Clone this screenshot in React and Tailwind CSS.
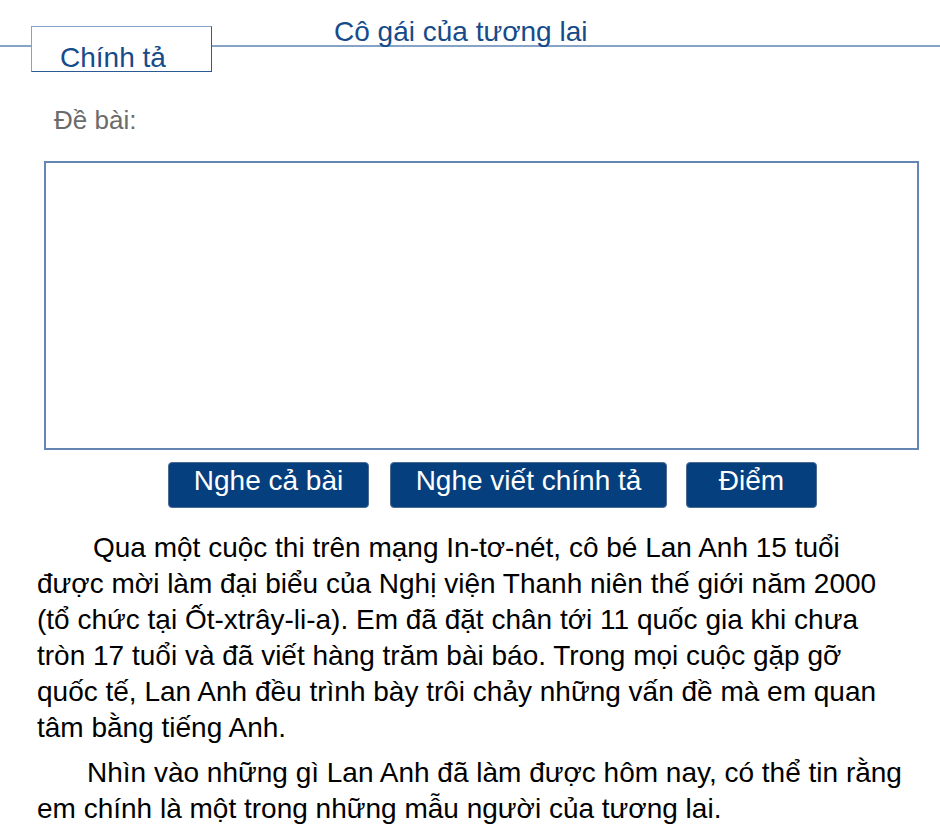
import React from "react";

export default function App() {
  const font = { fontFamily: '"Liberation Sans", Arial, sans-serif' };
  return (
    <div className="w-[940px] h-[827px] bg-white overflow-hidden" style={font}>
      {/* header */}
      <div className="flex items-start">
        <div className="w-[31px] h-[47px] border-b-2 border-[#86a3c6]" />
        <div className="mt-[26px] w-[181px] h-[46px] border border-[#86a3c6] border-b-[#2c5a93] border-r-[#2c5a93] bg-white pl-[28px] pt-[15px] text-[28px] leading-[32px] text-[#164b8a]">
          Chính tả
        </div>
        <div className="flex-1 h-[47px] border-b-2 border-[#86a3c6] pl-[122px] pt-[16px] text-[28px] leading-[32px] text-[#164b8a]">
          Cô gái của tương lai
        </div>
      </div>

      <div className="ml-[54px] mt-[33px] text-[26px] leading-[30px] text-[#6b6b6b]">
        Đề bài:
      </div>

      <div className="ml-[44px] mt-[26px] w-[875px] h-[289px] border-2 border-[#6586b3]" />

      <div className="flex mt-[12px] ml-[168px]">
        <button className="w-[201px] h-[46px] rounded-[4px] bg-[#063f7e] border border-[#4d6a90] text-white text-[28px] leading-[32px] pb-[8px] flex items-center justify-center">
          Nghe cả bài
        </button>
        <button className="ml-[21px] w-[277px] h-[46px] rounded-[4px] bg-[#063f7e] border border-[#4d6a90] text-white text-[28px] leading-[32px] pb-[8px] flex items-center justify-center">
          Nghe viết chính tả
        </button>
        <button className="ml-[19px] w-[131px] h-[46px] rounded-[4px] bg-[#063f7e] border border-[#4d6a90] text-white text-[28px] leading-[32px] pb-[8px] flex items-center justify-center">
          Điểm
        </button>
      </div>

      <div className="ml-[37px] mt-[22px] text-[28px] leading-[36px] text-black whitespace-nowrap">
        <p className="indent-[56px]">
          Qua một cuộc thi trên mạng In-tơ-nét, cô bé Lan Anh 15 tuổi
          <br />
          được mời làm đại biểu của Nghị viện Thanh niên thế giới năm 2000
          <br />
          (tổ chức tại Ốt-xtrây-li-a). Em đã đặt chân tới 11 quốc gia khi chưa
          <br />
          tròn 17 tuổi và đã viết hàng trăm bài báo. Trong mọi cuộc gặp gỡ
          <br />
          quốc tế, Lan Anh đều trình bày trôi chảy những vấn đề mà em quan
          <br />
          tâm bằng tiếng Anh.
        </p>
        <p className="indent-[50px] mt-[9px]">
          Nhìn vào những gì Lan Anh đã làm được hôm nay, có thể tin rằng
          <br />
          em chính là một trong những mẫu người của tương lai.
        </p>
      </div>
    </div>
  );
}
